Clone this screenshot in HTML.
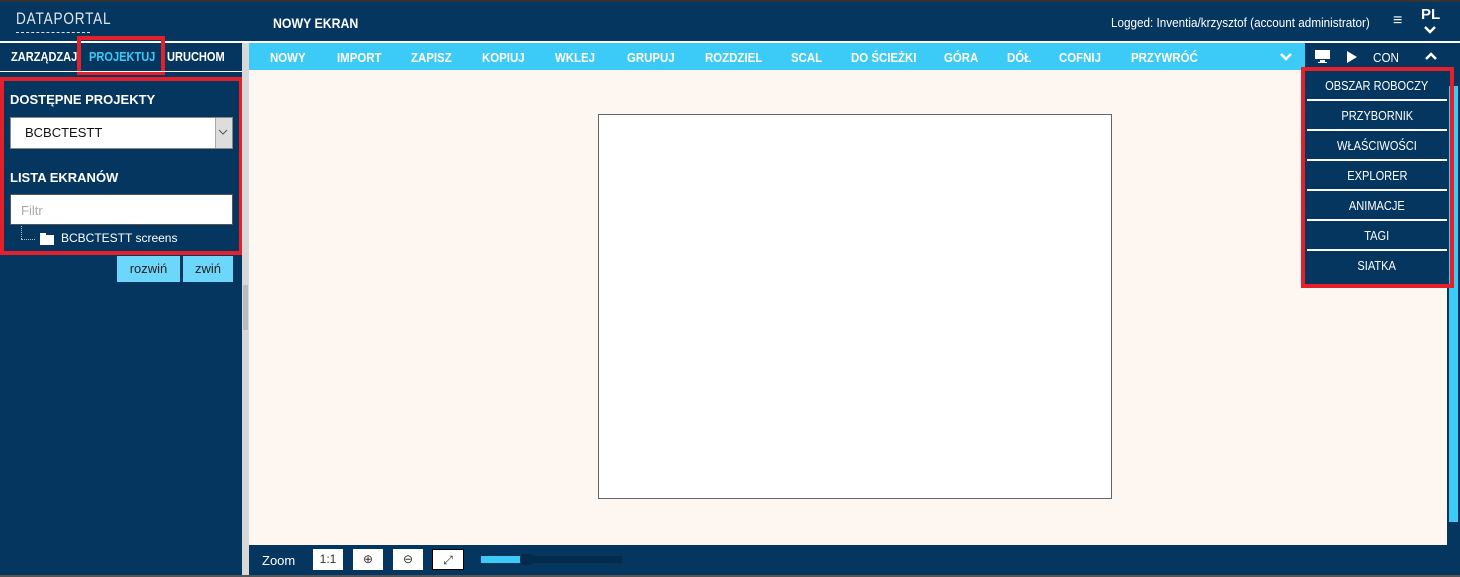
<!DOCTYPE html>
<html><head><meta charset="utf-8"><style>
*{box-sizing:border-box;margin:0;padding:0}
body{width:1460px;height:577px;background:#053660;font-family:"Liberation Sans",sans-serif;position:relative;overflow:hidden;color:#fff}
.a{position:absolute}
.tb span{position:absolute;top:7px;font-size:13px;font-weight:bold;color:#fff;transform:scaleX(.88);transform-origin:left}
.menu div{height:30px;border-bottom:2px solid #fff;text-align:center;line-height:29px;font-size:13px;color:#fff}
.menu div span{display:inline-block;transform:scaleX(.85)}
.btn{position:absolute;top:549px;height:21px;background:#fff;color:#333;font-size:12px;text-align:center;line-height:21px}
</style></head><body>
<div class="a" style="left:0;top:0;width:1460px;height:2px;background:#333"></div>
<div class="a" style="left:16px;top:9px;font-size:17px;letter-spacing:1px;color:#dfe6ee;transform:scaleX(.8);transform-origin:left">DATAPORTAL</div>
<div class="a" style="left:16px;top:32px;width:74px;border-top:1px dashed #dfe6ee"></div>
<div class="a" style="left:273px;top:15px;font-size:14px;font-weight:bold;transform:scaleX(.88);transform-origin:left">NOWY EKRAN</div>
<div class="a" style="left:1111px;top:15px;font-size:13px;transform:scaleX(.9);transform-origin:left;white-space:nowrap">Logged: Inventia/krzysztof (account administrator)</div>
<div class="a" style="left:1393px;top:12px;font-size:16px">≡</div>
<div class="a" style="left:1421px;top:6px;font-size:15px;font-weight:bold">PL</div>
<svg class="a" style="left:1423px;top:25px" width="14" height="10"><path d="M2 2 L7 7 L12 2" stroke="#fff" stroke-width="2.5" fill="none"/></svg>
<div class="a" style="left:0;top:41px;width:1460px;height:2px;background:#fff"></div>
<div class="a" style="left:11px;top:49px;font-size:13px;font-weight:bold;transform:scaleX(.85);transform-origin:left">ZARZĄDZAJ</div>
<div class="a" style="left:89px;top:49px;font-size:13px;font-weight:bold;color:#3ccbf7;transform:scaleX(.85);transform-origin:left">PROJEKTUJ</div>
<div class="a" style="left:167px;top:49px;font-size:13px;font-weight:bold;transform:scaleX(.85);transform-origin:left">URUCHOM</div>
<div class="a" style="left:77px;top:36px;width:88px;height:39px;border:4px solid #e4202a"></div>
<div class="a" style="left:0;top:71px;width:242px;height:1px;background:#fff"></div>
<div class="a" style="left:0;top:77px;width:243px;height:178px;border:4px solid #e4202a"></div>
<div class="a" style="left:10px;top:92px;font-size:13px;font-weight:bold">DOSTĘPNE PROJEKTY</div>
<div class="a" style="left:10px;top:117px;width:223px;height:32px;background:#fff;border:1px solid #888"></div>
<div class="a" style="left:25px;top:125px;font-size:13px;color:#111">BCBCTESTT</div>
<div class="a" style="left:215px;top:118px;width:17px;height:30px;background:#ddd;border-left:1px solid #aaa"></div>
<svg class="a" style="left:218px;top:129px" width="10" height="7"><path d="M1 1 L5 5 L9 1" stroke="#555" fill="none"/></svg>
<div class="a" style="left:10px;top:170px;font-size:13px;font-weight:bold">LISTA EKRANÓW</div>
<div class="a" style="left:10px;top:194px;width:223px;height:31px;background:#fff;border:1px solid #555"></div>
<div class="a" style="left:21px;top:203px;font-size:13px;color:#aaa">Filtr</div>
<div class="a" style="left:21px;top:226px;width:1px;height:13px;border-left:1px dotted #bbb"></div>
<div class="a" style="left:21px;top:239px;width:14px;border-top:1px dotted #bbb"></div>
<div class="a" style="left:40px;top:235px;width:14px;height:10px;background:#fff"></div>
<div class="a" style="left:40px;top:233px;width:6px;height:3px;background:#fff"></div>
<div class="a" style="left:61px;top:231px;font-size:12px">BCBCTESTT screens</div>
<div class="a" style="left:117px;top:256px;width:63px;height:26px;background:#6cd7fb;color:#222;font-size:13px;text-align:center;line-height:26px">rozwiń</div>
<div class="a" style="left:183px;top:256px;width:50px;height:26px;background:#6cd7fb;color:#222;font-size:13px;text-align:center;line-height:26px">zwiń</div>
<div class="a" style="left:242px;top:43px;width:7px;height:534px;background:#d8d8d8"></div>
<div class="a" style="left:243px;top:285px;width:5px;height:45px;background:#bbb"></div>
<div class="a tb" style="left:249px;top:43px;width:1056px;height:27px;background:#3ccbf7">
<span style="left:21px">NOWY</span><span style="left:88px">IMPORT</span><span style="left:162px">ZAPISZ</span><span style="left:233px">KOPIUJ</span><span style="left:306px">WKLEJ</span><span style="left:378px">GRUPUJ</span><span style="left:456px">ROZDZIEL</span><span style="left:542px">SCAL</span><span style="left:602px">DO ŚCIEŻKI</span><span style="left:695px">GÓRA</span><span style="left:758px">DÓŁ</span><span style="left:810px">COFNIJ</span><span style="left:882px">PRZYWRÓĆ</span>
<svg style="position:absolute;left:1030px;top:9px" width="14" height="10"><path d="M2 2 L7 7 L12 2" stroke="#fff" stroke-width="2.5" fill="none"/></svg>
</div>
<svg class="a" style="left:1315px;top:50px" width="15" height="14"><rect x="0" y="0" width="15" height="9" fill="#fff"/><rect x="5" y="10" width="5" height="2" fill="#fff"/><rect x="3" y="12" width="9" height="1" fill="#fff"/></svg>
<svg class="a" style="left:1346px;top:50px" width="12" height="14"><path d="M1 1 L11 7 L1 13Z" fill="#fff"/></svg>
<div class="a" style="left:1373px;top:50px;font-size:13px;transform:scaleX(.9);transform-origin:left">CON</div>
<svg class="a" style="left:1424px;top:52px" width="14" height="10"><path d="M2 7 L7 2 L12 7" stroke="#fff" stroke-width="2.5" fill="none"/></svg>
<div class="a" style="left:249px;top:70px;width:1198px;height:475px;background:#fef7f1"></div>
<div class="a" style="left:598px;top:114px;width:514px;height:385px;background:#fff;border:1px solid #666"></div>
<div class="a" style="left:1447px;top:70px;width:13px;height:475px;background:#053660"></div>
<div class="a" style="left:1449px;top:86px;width:9px;height:436px;background:#3ccbf7"></div>
<div class="a" style="left:1305px;top:70px;width:143px;height:214px;background:#053660"></div>
<div class="a menu" style="left:1307px;top:71px;width:140px">
<div><span>OBSZAR ROBOCZY</span></div><div><span>PRZYBORNIK</span></div><div><span>WŁAŚCIWOŚCI</span></div><div><span>EXPLORER</span></div><div><span>ANIMACJE</span></div><div><span>TAGI</span></div><div style="border:0"><span>SIATKA</span></div>
</div>
<div class="a" style="left:1301px;top:67px;width:153px;height:221px;border:4px solid #e4202a"></div>
<div class="a" style="left:249px;top:545px;width:1211px;height:30px;background:#053660"></div>
<div class="a" style="left:262px;top:553px;font-size:13px">Zoom</div>
<div class="btn" style="left:313px;width:30px">1:1</div>
<div class="btn" style="left:353px;width:30px">⊕</div>
<div class="btn" style="left:393px;width:30px">⊖</div>
<div class="btn" style="left:432px;width:32px;border:1px solid #000">⤢</div>
<div class="a" style="left:481px;top:556px;width:141px;height:7px;background:#042a4c"></div>
<div class="a" style="left:481px;top:556px;width:40px;height:7px;background:#3ccbf7"></div>
<div class="a" style="left:520px;top:554px;width:14px;height:11px;background:#042a4c;border-radius:4px"></div>
<div class="a" style="left:0;top:575px;width:1460px;height:2px;background:#555"></div>
</body></html>
